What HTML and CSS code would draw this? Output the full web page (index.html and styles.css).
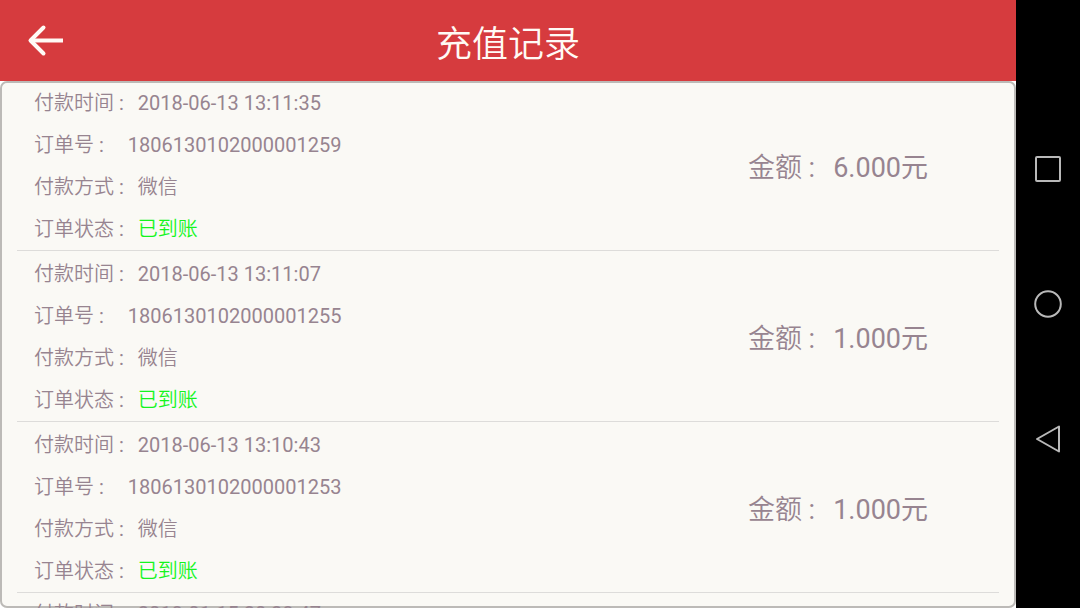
FILE: index.html
```html
<!DOCTYPE html>
<html lang="zh-CN">
<head>
<meta charset="utf-8">
<meta name="viewport" content="width=device-width, initial-scale=1">
<title>充值记录</title>
<link rel="stylesheet" href="styles.css">
</head>
<body>
<div class="app">
  <header class="topbar">
    <button class="back" type="button" aria-label="返回">
      <svg viewBox="0 0 38 34" width="38" height="34" aria-hidden="true"><path class="shaft" d="M37 16.500H4" /><path class="head" d="M17.500 3.500L4.500 16.500L17.500 29.500" /></svg>
    </button>
    <h1 class="title">充值记录</h1>
  </header>
  <main class="card">
    <ul class="records">
      <li class="record">
        <dl class="details">
          <div class="field"><dt>付款时间</dt><dd>2018-06-13 13:11:35</dd></div>
          <div class="field order"><dt>订单号</dt><dd>1806130102000001259</dd></div>
          <div class="field"><dt>付款方式</dt><dd class="method">微信</dd></div>
          <div class="field"><dt>订单状态</dt><dd class="done">已到账</dd></div>
        </dl>
        <p class="amount"><span class="label">金额</span>6.000元</p>
      </li>
      <li class="record">
        <dl class="details">
          <div class="field"><dt>付款时间</dt><dd>2018-06-13 13:11:07</dd></div>
          <div class="field order"><dt>订单号</dt><dd>1806130102000001255</dd></div>
          <div class="field"><dt>付款方式</dt><dd class="method">微信</dd></div>
          <div class="field"><dt>订单状态</dt><dd class="done">已到账</dd></div>
        </dl>
        <p class="amount"><span class="label">金额</span>1.000元</p>
      </li>
      <li class="record">
        <dl class="details">
          <div class="field"><dt>付款时间</dt><dd>2018-06-13 13:10:43</dd></div>
          <div class="field order"><dt>订单号</dt><dd>1806130102000001253</dd></div>
          <div class="field"><dt>付款方式</dt><dd class="method">微信</dd></div>
          <div class="field"><dt>订单状态</dt><dd class="done">已到账</dd></div>
        </dl>
        <p class="amount"><span class="label">金额</span>1.000元</p>
      </li>
      <li class="record">
        <dl class="details">
          <div class="field"><dt>付款时间</dt><dd>2018-01-15 20:28:47</dd></div>
        </dl>
      </li>
    </ul>
  </main>
</div>
<nav class="sysbar" aria-label="系统导航">
  <button type="button" aria-label="最近任务"><svg viewBox="0 0 30 30" width="30" height="30" aria-hidden="true"><rect x="3" y="3" width="24" height="24" rx="1" /></svg></button>
  <button type="button" aria-label="主屏幕"><svg viewBox="0 0 30 30" width="30" height="30" aria-hidden="true"><circle cx="15" cy="15" r="12.800" /></svg></button>
  <button type="button" aria-label="返回上一级"><svg viewBox="0 0 30 30" width="30" height="30" aria-hidden="true"><path d="M26 2.500V27.500L4 15Z" /></svg></button>
</nav>
</body>
</html>
```
FILE: styles.css
```css
* {
  box-sizing: border-box;
}

body {
  margin: 0;
  display: flex;
  height: 100vh;
  overflow: hidden;
  background: #000;
  color: #978490;
  font-family: Roboto, "Noto Sans CJK SC", sans-serif;
  font-size: 20px;
}

button {
  display: flex;
  padding: 0;
  border: 0;
  background: none;
}

svg {
  fill: none;
  stroke-linejoin: round;
}

.app {
  flex: 1;
  display: flex;
  flex-direction: column;
  min-width: 0;
  background: #fff;
}

.topbar {
  flex: none;
  display: grid;
  grid-template-columns: 1fr auto 1fr;
  align-items: center;
  height: 81px;
  padding: 0 26px;
  background: #d63b3e;
}

.back {
  justify-self: start;
}

.back svg {
  stroke: #fffaf5;
  stroke-width: 4;
}

.head {
  stroke-linecap: round;
}

.title {
  margin: 0;
  color: #fffaf5;
  font-family: "Noto Sans CJK SC", sans-serif;
  font-size: 36px;
  font-weight: 350;
  line-height: 48px;
}

.card {
  flex: 1;
  min-height: 0;
  overflow: hidden;
  padding: 1px 17px 0;
  border-radius: 7px;
  box-shadow: inset 0 0 0 2px #bcbab7;
  background: #faf9f5;
}

.records {
  margin: 0;
  padding: 0;
  list-style: none;
}

.record {
  display: flex;
  align-items: center;
  justify-content: space-between;
  padding: 2px 71px 0 17px;
  border-bottom: 1px solid #dddcda;
}

.record:first-child,
.record:last-child {
  padding-top: 0;
}

.details {
  margin: 0;
}

.field {
  display: flex;
  line-height: 42px;
}

.field dt,
.label,
.method,
.done {
  font-weight: 350;
}

.field dt::after,
.label::after {
  content: " :";
  font-weight: 400;
}

.field dd {
  margin: 0 0 0 14px;
}

.order dd {
  margin-left: 24px;
}

.done {
  color: #14f51e;
}

.amount {
  margin: 0;
  padding-bottom: 2px;
  font-size: 27px;
}

.label {
  margin-right: 18px;
}

.sysbar {
  flex: none;
  display: flex;
  flex-direction: column;
  align-items: center;
  justify-content: center;
  gap: 105px;
  width: 64px;
  background: #000;
}

.sysbar svg {
  stroke: #b9b9b9;
  stroke-width: 2;
}
```
